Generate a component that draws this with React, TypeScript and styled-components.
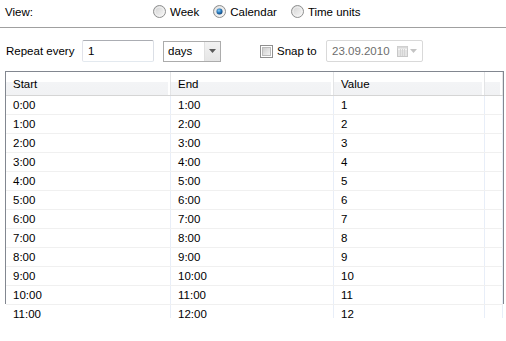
import React from "react";
import styled, { createGlobalStyle } from "styled-components";

const Global = createGlobalStyle`
  html, body { margin: 0; padding: 0; background: #fff; }
  body {
    font-family: "Liberation Sans", Arial, sans-serif;
    font-size: 11.5px;
    color: #000;
    width: 506px;
    height: 341px;
    overflow: hidden;
  }
`;

const Page = styled.div`
  display: flex;
  flex-direction: column;
  width: 506px;
`;

const ViewBar = styled.div`
  display: flex;
  align-items: center;
  box-sizing: border-box;
  height: 28px;
  padding-bottom: 4px;
  border-bottom: 1px solid #a0a0a0;
  box-shadow: 0 1px 0 #fff;
`;

const ViewLabel = styled.div`
  width: 148px;
  padding-left: 5px;
  box-sizing: content-box;
`;

const RadioGroup = styled.div`
  display: flex;
  align-items: center;
  gap: 14px;
`;

const RadioItem = styled.label`
  display: flex;
  align-items: center;
  gap: 4px;
`;

const OptionsRow = styled.div`
  display: flex;
  align-items: center;
  height: 22px;
  margin-top: 12px;
  padding-left: 6px;
`;

const Label = styled.span<{ $w?: number }>`
  width: ${(p) => (p.$w ? `${p.$w}px` : "auto")};
  white-space: nowrap;
`;

const TextBox = styled.div<{ $w: number; $ml?: number; $disabled?: boolean }>`
  box-sizing: border-box;
  width: ${(p) => p.$w}px;
  height: 22px;
  margin-left: ${(p) => p.$ml ?? 0}px;
  display: flex;
  align-items: center;
  padding-left: 5px;
  border: 1px solid ${(p) => (p.$disabled ? "#d9d9d9" : "#abadb3")};
  border-left-color: ${(p) => (p.$disabled ? "#d9d9d9" : "#e2e3ea")};
  border-right-color: ${(p) => (p.$disabled ? "#d9d9d9" : "#dbdfe6")};
  border-bottom-color: ${(p) => (p.$disabled ? "#d9d9d9" : "#e3e9ef")};
  border-radius: 2px;
  color: ${(p) => (p.$disabled ? "#6d6d6d" : "#000")};
  background: #fff;
`;

const Combo = styled.div<{ $w: number; $ml: number }>`
  box-sizing: border-box;
  width: ${(p) => p.$w}px;
  height: 21px;
  margin-left: ${(p) => p.$ml}px;
  display: flex;
  border: 1px solid #acacac;
  background: #fff;
`;

const ComboText = styled.div`
  flex: 1;
  display: flex;
  align-items: center;
  padding-left: 4px;
`;

const ComboButton = styled.div`
  width: 15px;
  display: flex;
  align-items: center;
  justify-content: center;
  background: linear-gradient(#f2f2f2, #e5e5e5);
  border-left: 1px solid #e0e0e0;
`;

const DateText = styled.span`
  flex: 1;
`;

const DateIcons = styled.div`
  display: flex;
  align-items: center;
  gap: 2px;
  padding-right: 5px;
`;

const CheckItem = styled.label<{ $ml: number }>`
  display: flex;
  align-items: center;
  gap: 4px;
  margin-left: ${(p) => p.$ml}px;
  width: 66px;
`;

const TableFrame = styled.div`
  box-sizing: border-box;
  margin: 9px 0 0 5px;
  width: 499px;
  height: 233px;
  border: 1px solid #828790;
  border-bottom: none;
  overflow: visible;
`;

const TableClip = styled.div`
  height: 246px;
  overflow: hidden;
`;

const Cols = "165px 163px 151px 1fr";

const HeaderRow = styled.div`
  display: grid;
  grid-template-columns: ${Cols};
  height: 23px;
  background: linear-gradient(#fff 0, #fff 45%, #f3f4f6 45%, #f1f2f4 100%);
  border-bottom: 1px solid #d5d5d5;
`;

const HeaderCell = styled.div`
  display: flex;
  align-items: center;
  padding-left: 7px;
  border-right: 1px solid #e3e4e6;
  box-shadow: inset -2px 0 0 #fff;
`;

const BodyRow = styled.div`
  display: grid;
  grid-template-columns: ${Cols};
  height: 18px;
  border-bottom: 1px solid #f0f0f0;
`;

const BodyCell = styled.div`
  display: flex;
  align-items: center;
  padding-left: 7px;
  border-right: 1px solid #e8eef8;
  white-space: nowrap;
`;

const RadioIcon = ({ checked }: { checked?: boolean }) => (
  <svg width="13" height="13" viewBox="0 0 13 13">
    <defs>
      <linearGradient id={checked ? "rgc" : "rgu"} x1="0" y1="0" x2="1" y2="1">
        <stop offset="0" stopColor="#cfcfcf" />
        <stop offset="1" stopColor="#fbfbfb" />
      </linearGradient>
      <radialGradient id="rdot" cx="0.4" cy="0.35" r="0.7">
        <stop offset="0" stopColor="#8ed0f8" />
        <stop offset="0.5" stopColor="#2a7cc0" />
        <stop offset="1" stopColor="#0e3e73" />
      </radialGradient>
    </defs>
    <circle cx="6.5" cy="6.5" r="6" fill={`url(#${checked ? "rgc" : "rgu"})`} stroke="#8e8f8f" />
    <circle cx="6.5" cy="6.5" r="4.5" fill="none" stroke="#f4f4f4" strokeWidth="0.8" />
    {checked && <circle cx="6.5" cy="6.5" r="3" fill="url(#rdot)" />}
  </svg>
);

const CheckIcon = () => (
  <svg width="13" height="13" viewBox="0 0 13 13">
    <defs>
      <linearGradient id="cbg" x1="0" y1="0" x2="1" y2="1">
        <stop offset="0" stopColor="#cbcbcb" />
        <stop offset="1" stopColor="#f6f6f6" />
      </linearGradient>
    </defs>
    <rect x="0.5" y="0.5" width="12" height="12" fill="#fff" stroke="#8f8f8f" />
    <rect x="2.5" y="2.5" width="8" height="8" fill="url(#cbg)" stroke="#bcbcbc" />
  </svg>
);

const Arrow = ({ color }: { color: string }) => (
  <svg width="7" height="4" viewBox="0 0 7 4">
    <path d="M0 0h7L3.5 4z" fill={color} />
  </svg>
);

const CalendarIcon = () => (
  <svg width="11" height="11" viewBox="0 0 11 11">
    <rect x="0.5" y="0.5" width="10" height="10" fill="#f4f4f4" stroke="#c8c8c8" />
    <rect x="0.5" y="0.5" width="10" height="2" fill="#d8d8d8" />
    <path d="M3.5 3v7M5.5 3v7M7.5 3v7M1 5h9M1 7h9M1 9h9" stroke="#d4d4d4" strokeWidth="1" />
  </svg>
);

const rows = Array.from({ length: 12 }, (_, i) => ({
  start: `${i}:00`,
  end: `${i + 1}:00`,
  value: `${i + 1}`,
}));

export default function App() {
  return (
    <Page>
      <Global />
      <ViewBar>
        <ViewLabel>View:</ViewLabel>
        <RadioGroup>
          <RadioItem>
            <RadioIcon />
            Week
          </RadioItem>
          <RadioItem>
            <RadioIcon checked />
            Calendar
          </RadioItem>
          <RadioItem>
            <RadioIcon />
            Time units
          </RadioItem>
        </RadioGroup>
      </ViewBar>
      <OptionsRow>
        <Label $w={76}>Repeat every</Label>
        <TextBox $w={72}>1</TextBox>
        <Combo $w={58} $ml={9}>
          <ComboText>days</ComboText>
          <ComboButton>
            <Arrow color="#5a5a5a" />
          </ComboButton>
        </Combo>
        <CheckItem $ml={39}>
          <CheckIcon />
          Snap to
        </CheckItem>
        <TextBox $w={97} $disabled>
          <DateText>23.09.2010</DateText>
          <DateIcons>
            <CalendarIcon />
            <Arrow color="#c4c4c4" />
          </DateIcons>
        </TextBox>
      </OptionsRow>
      <TableFrame>
        <TableClip>
          <HeaderRow>
            <HeaderCell>Start</HeaderCell>
            <HeaderCell>End</HeaderCell>
            <HeaderCell>Value</HeaderCell>
            <HeaderCell />
          </HeaderRow>
          {rows.map((r) => (
            <BodyRow key={r.start}>
              <BodyCell>{r.start}</BodyCell>
              <BodyCell>{r.end}</BodyCell>
              <BodyCell>{r.value}</BodyCell>
              <BodyCell />
            </BodyRow>
          ))}
        </TableClip>
      </TableFrame>
    </Page>
  );
}
